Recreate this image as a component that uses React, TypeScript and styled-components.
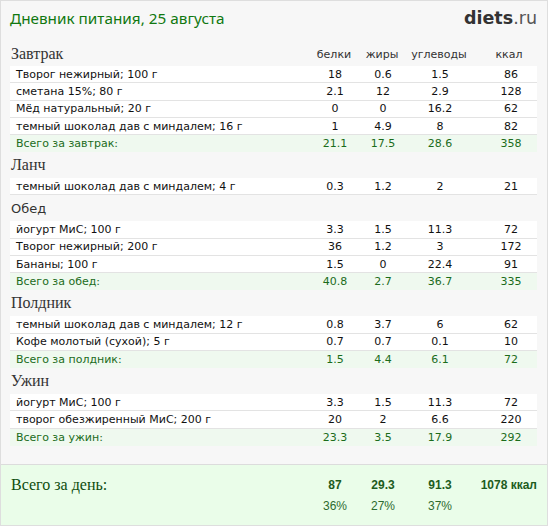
import styled, { createGlobalStyle } from "styled-components";

const GlobalStyle = createGlobalStyle`
    html, body {
        margin: 0;
        padding: 0;
        background: #ffffff;
    }
    * {
        box-sizing: border-box;
    }
`;

type Item = { name: string; values: string[] };
type Meal = { title: string; sans?: boolean; items: Item[]; total?: string[]; totalLabel?: string };

const meals: Meal[] = [
    {
        title: "Завтрак",
        items: [
            { name: "Творог нежирный; 100 г", values: ["18", "0.6", "1.5", "86"] },
            { name: "сметана 15%; 80 г", values: ["2.1", "12", "2.9", "128"] },
            { name: "Мёд натуральный; 20 г", values: ["0", "0", "16.2", "62"] },
            { name: "темный шоколад дав с миндалем; 16 г", values: ["1", "4.9", "8", "82"] },
        ],
        totalLabel: "Всего за завтрак:",
        total: ["21.1", "17.5", "28.6", "358"],
    },
    {
        title: "Ланч",
        items: [{ name: "темный шоколад дав с миндалем; 4 г", values: ["0.3", "1.2", "2", "21"] }],
    },
    {
        title: "Обед",
        sans: true,
        items: [
            { name: "йогурт МиС; 100 г", values: ["3.3", "1.5", "11.3", "72"] },
            { name: "Творог нежирный; 200 г", values: ["36", "1.2", "3", "172"] },
            { name: "Бананы; 100 г", values: ["1.5", "0", "22.4", "91"] },
        ],
        totalLabel: "Всего за обед:",
        total: ["40.8", "2.7", "36.7", "335"],
    },
    {
        title: "Полдник",
        items: [
            { name: "темный шоколад дав с миндалем; 12 г", values: ["0.8", "3.7", "6", "62"] },
            { name: "Кофе молотый (сухой); 5 г", values: ["0.7", "0.7", "0.1", "10"] },
        ],
        totalLabel: "Всего за полдник:",
        total: ["1.5", "4.4", "6.1", "72"],
    },
    {
        title: "Ужин",
        items: [
            { name: "йогурт МиС; 100 г", values: ["3.3", "1.5", "11.3", "72"] },
            { name: "творог обезжиренный МиС; 200 г", values: ["20", "2", "6.6", "220"] },
        ],
        totalLabel: "Всего за ужин:",
        total: ["23.3", "3.5", "17.9", "292"],
    },
];

const columns = ["белки", "жиры", "углеводы", "ккал"];

const Page = styled.div`
    width: 548px;
    height: 526px;
    border: 1px solid #dedede;
    background: #f7f7f7;
    display: flex;
    flex-direction: column;
    font-family: "DejaVu Sans", Verdana, sans-serif;
`;

const Main = styled.div`
    padding: 0 10px 0 9px;
`;

const Header = styled.div`
    height: 41px;
    padding-top: 5px;
    display: flex;
    justify-content: space-between;
    align-items: flex-start;
`;

const Title = styled.h1`
    margin: 0;
    font-family: "Noto Sans", "DejaVu Sans", sans-serif;
    font-size: 15.3px;
    font-weight: 400;
    line-height: 24px;
    color: #107810;
`;

const Logo = styled.div`
    font-family: "DejaVu Sans", sans-serif;
    font-size: 17.5px;
    line-height: 24px;
    color: #555;

    b {
        color: #333;
        font-weight: 700;
    }
`;

const Grid = styled.div`
    display: grid;
    grid-template-columns: 1fr 48px 48px 66px 64px;
    align-items: center;
`;

const HeadingRow = styled(Grid)<{ $first?: boolean }>`
    height: ${(p) => (p.$first ? "24px" : "26px")};
`;

const Heading = styled.div<{ $sans?: boolean }>`
    font-family: ${(p) => (p.$sans ? '"DejaVu Sans", sans-serif' : '"Liberation Serif", serif')};
    font-size: ${(p) => (p.$sans ? "13px" : "16px")};
    color: #333;
    padding-left: 1px;
`;

const ColHead = styled.div<{ $last?: boolean }>`
    font-size: 11px;
    color: #333;
    text-align: center;
    padding-left: ${(p) => (p.$last ? "10px" : "0")};
    padding-right: 2px;
`;

const Row = styled(Grid)<{ $total?: boolean }>`
    height: ${(p) => (p.$total ? "17px" : "17.3px")};
    background: ${(p) => (p.$total ? "#eff9ef" : "#ffffff")};
    border-bottom: ${(p) => (p.$total ? "none" : "1px solid #e3e3e3")};
    font-size: 11px;
    color: ${(p) => (p.$total ? "#1b6c1b" : "#111")};
`;

const Name = styled.div`
    padding-left: 6px;
    white-space: nowrap;
    overflow: hidden;
`;

const Num = styled.div<{ $last?: boolean }>`
    text-align: center;
    padding-left: ${(p) => (p.$last ? "12px" : "0")};
`;

const Footer = styled.div`
    margin-top: auto;
    height: 61px;
    border-top: 1px solid #dcdcdc;
    background: #eafde9;
    padding: 12px 10px 0 9px;
`;

const FooterGrid = styled.div`
    display: grid;
    grid-template-columns: 1fr 48px 48px 66px 64px;
    grid-template-rows: 16px 16px;
    row-gap: 5px;
    align-items: center;
`;

const DayLabel = styled.div`
    font-family: "Liberation Serif", serif;
    font-size: 16px;
    color: #0e4d0e;
    padding-left: 1px;
`;

const DayValue = styled.div<{ $kcal?: boolean }>`
    font-family: "Liberation Sans", Arial, sans-serif;
    font-size: 12px;
    font-weight: 700;
    color: #1d5c1d;
    text-align: ${(p) => (p.$kcal ? "right" : "center")};
    white-space: nowrap;
    justify-self: ${(p) => (p.$kcal ? "end" : "stretch")};
`;

const Percent = styled.div`
    font-family: "Liberation Sans", Arial, sans-serif;
    font-size: 12px;
    color: #2e6b2e;
    text-align: center;
`;

export default function App() {
    return (
        <>
            <GlobalStyle />
            <Page>
                <Main>
                    <Header>
                        <Title>Дневник питания, 25 августа</Title>
                        <Logo>
                            <b>diets</b>.ru
                        </Logo>
                    </Header>
                    {meals.map((meal, i) => (
                        <div key={meal.title}>
                            <HeadingRow $first={i === 0}>
                                <Heading $sans={meal.sans}>{meal.title}</Heading>
                                {i === 0 &&
                                    columns.map((c, j) => (
                                        <ColHead key={c} $last={j === 3}>
                                            {c}
                                        </ColHead>
                                    ))}
                            </HeadingRow>
                            {meal.items.map((item, k) => (
                                <Row key={k}>
                                    <Name>{item.name}</Name>
                                    {item.values.map((v, j) => (
                                        <Num key={j} $last={j === 3}>
                                            {v}
                                        </Num>
                                    ))}
                                </Row>
                            ))}
                            {meal.total && (
                                <Row $total>
                                    <Name>{meal.totalLabel}</Name>
                                    {meal.total.map((v, j) => (
                                        <Num key={j} $last={j === 3}>
                                            {v}
                                        </Num>
                                    ))}
                                </Row>
                            )}
                        </div>
                    ))}
                </Main>
                <Footer>
                    <FooterGrid>
                        <DayLabel>Всего за день:</DayLabel>
                        <DayValue>87</DayValue>
                        <DayValue>29.3</DayValue>
                        <DayValue>91.3</DayValue>
                        <DayValue $kcal>1078 ккал</DayValue>
                        <div />
                        <Percent>36%</Percent>
                        <Percent>27%</Percent>
                        <Percent>37%</Percent>
                        <div />
                    </FooterGrid>
                </Footer>
            </Page>
        </>
    );
}
